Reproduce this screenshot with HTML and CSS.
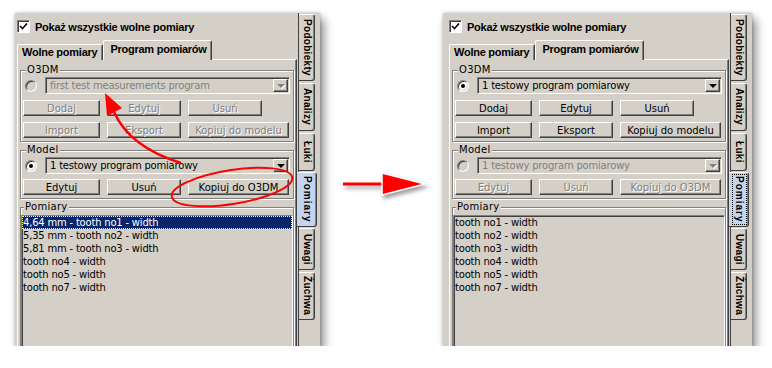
FILE: index.html
```html
<!DOCTYPE html>
<html>
<head>
  <meta charset="utf-8">
  <title>Program pomiarów</title>
  <link rel="stylesheet" href="styles.css">
</head>
<body>
  <div class="stage">
    <!-- before: model program selected -->
    <div class="panel">
      <div class="main">
        <label class="check-row"><span class="checkbox"><svg width="9" height="9" viewBox="0 0 9 9"><path d="M1 4 L3.5 6.5 L8 1.5" fill="none" stroke="#000" stroke-width="1.6"/></svg></span>Pokaż wszystkie wolne pomiary</label>
        <div class="tabs">
          <span class="tab">Wolne pomiary</span>
          <span class="tab active">Program pomiarów</span>
        </div>
        <div class="tab-body">
          <fieldset class="group">
            <legend>O3DM</legend>
            <div class="pick">
              <span class="radio"></span>
              <div class="combo disabled"><span class="combo-text">first test measurements program</span><span class="combo-btn"></span></div>
            </div>
            <div class="buttons">
              <button class="btn" disabled>Dodaj</button>
              <button class="btn" disabled>Edytuj</button>
              <button class="btn short" disabled>Usuń</button>
              <button class="btn" disabled>Import</button>
              <button class="btn" disabled>Eksport</button>
              <button class="btn" disabled>Kopiuj do modelu</button>
            </div>
          </fieldset>
          <fieldset class="group">
            <legend>Model</legend>
            <div class="pick">
              <span class="radio on checked"></span>
              <div class="combo"><span class="combo-text">1 testowy program pomiarowy</span><span class="combo-btn"></span></div>
            </div>
            <div class="buttons tight">
              <button class="btn">Edytuj</button>
              <button class="btn">Usuń</button>
              <button class="btn">Kopiuj do O3DM</button>
            </div>
          </fieldset>
          <fieldset class="group group-list">
            <legend>Pomiary</legend>
            <ul class="list">
              <li class="selected">4,64 mm - tooth no1 - width</li>
              <li>5,35 mm - tooth no2 - width</li>
              <li>5,81 mm - tooth no3 - width</li>
              <li>tooth no4 - width</li>
              <li>tooth no5 - width</li>
              <li>tooth no7 - width</li>
            </ul>
          </fieldset>
        </div>
      </div>
      <div class="side">
        <span class="stab h-podobiekty">Podobiekty</span>
        <span class="stab h-analizy">Analizy</span>
        <span class="stab h-luki">Łuki</span>
        <span class="stab current">Pomiary</span>
        <span class="stab h-uwagi">Uwagi</span>
        <span class="stab h-zuchwa">Żuchwa</span>
      </div>
      <svg class="marks" width="305" height="333" viewBox="0 0 305 333">
        <ellipse cx="217" cy="174" rx="61" ry="17" transform="rotate(-9 217 174)" fill="none" stroke="#f00" stroke-width="2"/>
        <path d="M166 150 C140 142 112 128 99 99" fill="none" stroke="#f00" stroke-width="2.5"/>
        <polygon points="90,80 107,95 92,103" fill="#f00"/>
      </svg>
    </div>

    <svg class="arrow" width="123" height="333" viewBox="0 0 123 333">
      <rect x="23" y="169.5" width="40" height="3" fill="#f00"/>
      <polygon points="62,160 105,171 62,182" fill="#f00" stroke="#fff" stroke-width="1.5"/>
    </svg>

    <!-- after: O3DM program selected -->
    <div class="panel panel-wide">
      <div class="main">
        <label class="check-row"><span class="checkbox"><svg width="9" height="9" viewBox="0 0 9 9"><path d="M1 4 L3.5 6.5 L8 1.5" fill="none" stroke="#000" stroke-width="1.6"/></svg></span>Pokaż wszystkie wolne pomiary</label>
        <div class="tabs">
          <span class="tab">Wolne pomiary</span>
          <span class="tab active">Program pomiarów</span>
        </div>
        <div class="tab-body">
          <fieldset class="group">
            <legend>O3DM</legend>
            <div class="pick">
              <span class="radio on checked"></span>
              <div class="combo"><span class="combo-text">1 testowy program pomiarowy</span><span class="combo-btn"></span></div>
            </div>
            <div class="buttons">
              <button class="btn">Dodaj</button>
              <button class="btn">Edytuj</button>
              <button class="btn short">Usuń</button>
              <button class="btn">Import</button>
              <button class="btn">Eksport</button>
              <button class="btn">Kopiuj do modelu</button>
            </div>
          </fieldset>
          <fieldset class="group">
            <legend>Model</legend>
            <div class="pick">
              <span class="radio"></span>
              <div class="combo disabled"><span class="combo-text">1 testowy program pomiarowy</span><span class="combo-btn"></span></div>
            </div>
            <div class="buttons tight">
              <button class="btn" disabled>Edytuj</button>
              <button class="btn" disabled>Usuń</button>
              <button class="btn" disabled>Kopiuj do O3DM</button>
            </div>
          </fieldset>
          <fieldset class="group group-list">
            <legend>Pomiary</legend>
            <ul class="list">
              <li>tooth no1 - width</li>
              <li>tooth no2 - width</li>
              <li>tooth no3 - width</li>
              <li>tooth no4 - width</li>
              <li>tooth no5 - width</li>
              <li>tooth no7 - width</li>
            </ul>
          </fieldset>
        </div>
      </div>
      <div class="side">
        <span class="stab h-podobiekty">Podobiekty</span>
        <span class="stab h-analizy">Analizy</span>
        <span class="stab h-luki">Łuki</span>
        <span class="stab current"><span class="focus">Pomiary</span></span>
        <span class="stab h-uwagi">Uwagi</span>
        <span class="stab h-zuchwa">Żuchwa</span>
      </div>
    </div>
  </div>
</body>
</html>
```

FILE: styles.css
```css
* {
  box-sizing: border-box;
}
body {
  margin: 0;
  background: #fff;
  font-family: "DejaVu Sans", sans-serif;
  font-size: 10px;
  letter-spacing: -0.2px;
  color: #000;
}
.stage {
  display: flex;
  align-items: flex-start;
  padding: 13px 0 0 15px;
}
.panel {
  position: relative;
  display: flex;
  flex: none;
  width: 305px;
  height: 333px;
  background: #d4d0c8;
  overflow: hidden;
  box-shadow: 4px 6px 9px rgba(0, 0, 0, .45), 0 0 3px rgba(0, 0, 0, .25);
}
.panel-wide {
  width: 309px;
  padding-left: 4px;
}
.main {
  display: flex;
  flex-direction: column;
  width: 284px;
  padding: 0 1px 0 2px;
  border-right: 1px solid #404040;
}

/* checkbox line */
.check-row {
  display: flex;
  align-items: center;
  gap: 5px;
  height: 13px;
  margin-top: 7px;
  font: bold 11px "Liberation Sans", sans-serif;
  letter-spacing: -0.25px;
}
.checkbox {
  display: flex;
  align-items: center;
  justify-content: center;
  width: 13px;
  height: 13px;
  background: #fff;
  border: 1px solid;
  border-color: #808080 #fff #fff #808080;
  box-shadow: inset 1px 1px 0 #404040;
}

/* horizontal tabs */
.tabs {
  position: relative;
  z-index: 1;
  display: flex;
  align-items: flex-end;
  height: 20px;
  margin-top: 7px;
}
.tab {
  height: 16px;
  padding: 0 5px 0 4px;
  border: 1px solid;
  border-bottom: none;
  border-color: #fff #404040 transparent #fff;
  border-radius: 2px 2px 0 0;
  box-shadow: inset -1px 0 0 #808080;
  font: bold 11px/15px "Liberation Sans", sans-serif;
  letter-spacing: -0.25px;
  background: #d4d0c8;
}
.tab.active {
  height: 20px;
  padding: 0 4px 0 6px;
  line-height: 17px;
}
.tab-body {
  flex: 1;
  margin-top: -1px;
  padding: 4px 2px 0;
  border-top: 1px solid #fff;
  border-left: 1px solid #fff;
  border-right: 1px solid #404040;
  box-shadow: inset -1px 0 0 #808080;
}

/* group boxes */
.group {
  margin: 0;
  padding: 1px 3px 3px 2px;
  min-width: 0;
  border: 1px solid #808080;
  box-shadow: 1px 1px 0 #fff, inset 1px 1px 0 #fff;
}
.group + .group {
  margin-top: 2px;
}
.group legend {
  margin-left: 3px;
  padding: 0 1px;
  line-height: 12px;
  background: #d4d0c8;
  letter-spacing: 0.3px;
}
.group-list {
  padding: 2px 0 0 0;
}
.pick {
  display: flex;
  align-items: center;
  height: 17px;
}
.radio {
  position: relative;
  flex: none;
  width: 12px;
  height: 12px;
  margin: 0 8px 0 2px;
  border-radius: 50%;
  border: 1px solid;
  border-color: #808080 #fff #fff #808080;
  box-shadow: inset 1px 1px 0 #404040, inset -1px -1px 0 #d4d0c8;
  background: #d4d0c8;
}
.radio.on {
  background: #fff;
}
.radio.checked::after {
  content: "";
  position: absolute;
  left: 3px;
  top: 3px;
  width: 4px;
  height: 4px;
  border-radius: 50%;
  background: #000;
}

/* combo box */
.combo {
  display: flex;
  align-items: center;
  flex: 1;
  height: 17px;
  padding: 1px 1px 1px 4px;
  border: 1px solid;
  border-color: #808080 #fff #fff #808080;
  box-shadow: inset 1px 1px 0 #404040;
}
.combo-text {
  flex: 1;
  white-space: nowrap;
  overflow: hidden;
}
.combo-btn {
  display: flex;
  align-items: center;
  justify-content: center;
  width: 15px;
  height: 13px;
  border: 1px solid;
  border-color: #fff #404040 #404040 #fff;
  box-shadow: inset -1px -1px 0 #808080;
}
.combo-btn::after {
  content: "";
  border-left: 4px solid transparent;
  border-right: 4px solid transparent;
  border-top: 4px solid #000;
}
.combo.disabled .combo-text {
  color: #808080;
}
.combo.disabled .combo-btn::after {
  border-top-color: #808080;
  filter: drop-shadow(1px 1px 0 #fff);
}

/* push buttons */
.buttons {
  display: grid;
  grid-template-columns: 77px 74px 101px;
  column-gap: 7px;
  row-gap: 6px;
  margin-top: 6px;
}
.buttons.tight {
  margin-top: 5px;
}
.btn {
  height: 16px;
  padding: 0;
  font: inherit;
  line-height: 13px;
  color: #000;
  background: #d4d0c8;
  border: 1px solid;
  border-color: #fff #404040 #404040 #fff;
  box-shadow: inset -1px -1px 0 #808080;
}
.btn.short {
  width: 74px;
}
.btn:disabled {
  color: #808080;
  text-shadow: 1px 1px 0 #fff;
}

/* measurements list */
.list {
  height: 140px;
  margin: 0;
  padding: 0;
  list-style: none;
  border: 1px solid;
  border-color: #808080 #fff #fff #808080;
  box-shadow: inset 1px 1px 0 #404040;
}
.list li {
  height: 13px;
  padding: 0 1px;
  line-height: 13px;
  white-space: nowrap;
}
.list li.selected {
  color: #fff;
  background: #0a246a;
  outline: 1px dotted #ffff80;
  outline-offset: -1px;
}

/* vertical tabs on the right */
.side {
  display: flex;
  flex-direction: column;
  padding-top: 1px;
  width: 21px;
}
.stab {
  position: relative;
  width: 16px;
  margin-bottom: 2px;
  writing-mode: vertical-rl;
  text-align: center;
  font: bold 10px/14px "Liberation Sans", sans-serif;
  letter-spacing: 0.3px;
  border: 1px solid;
  border-left: none;
  border-color: #fff #404040 #404040 transparent;
  border-radius: 0 3px 3px 0;
  box-shadow: inset -1px 0 0 #808080;
}
.h-podobiekty { height: 67px; }
.h-analizy { height: 48px; }
.h-luki { height: 38px; }
.h-uwagi { height: 42px; }
.h-zuchwa { height: 48px; }
.stab.current {
  z-index: 1;
  width: 20px;
  height: 55px;
  margin: -1px 0 1px -2px;
  line-height: 18px;
  letter-spacing: 1px;
  background: #c6d5ee;
}
.focus {
  outline: 1px dotted #000;
  outline-offset: 1px;
}

/* annotations */
.marks {
  position: absolute;
  left: 0;
  top: 0;
  pointer-events: none;
}
.arrow {
  flex: none;
  filter: drop-shadow(2px 3px 2px rgba(0, 0, 0, .4));
}
```
